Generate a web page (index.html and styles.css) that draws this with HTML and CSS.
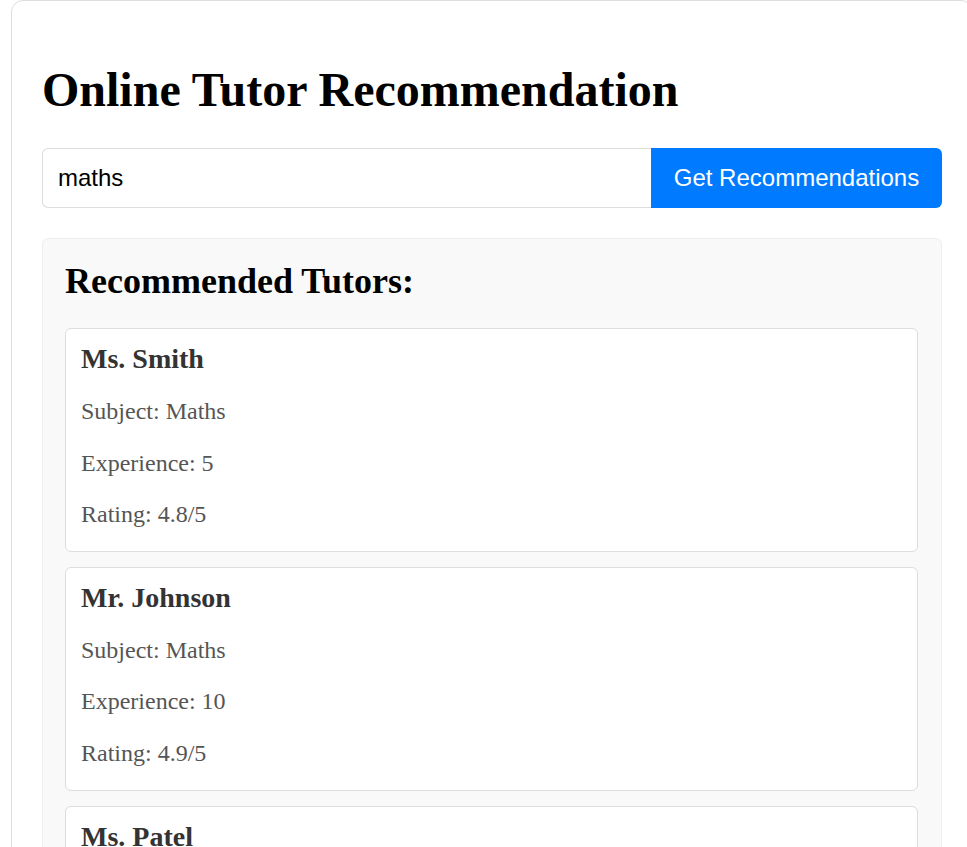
FILE: index.html
```html
<!DOCTYPE html>
<html lang="en">
<head>
<meta charset="utf-8">
<title>Online Tutor Recommendation</title>
<link rel="stylesheet" href="styles.css">
</head>
<body>
<div class="container">
  <h1 class="title">Online Tutor Recommendation</h1>
  <form class="search">
    <input class="search-input" type="text" value="maths">
    <button class="search-btn" type="button">Get Recommendations</button>
  </form>
  <section class="results">
    <h2 class="results-title">Recommended Tutors:</h2>
    <div class="card">
      <h3 class="card-name">Ms. Smith</h3>
      <p class="card-line">Subject: Maths</p>
      <p class="card-line">Experience: 5</p>
      <p class="card-line">Rating: 4.8/5</p>
    </div>
    <div class="card">
      <h3 class="card-name">Mr. Johnson</h3>
      <p class="card-line">Subject: Maths</p>
      <p class="card-line">Experience: 10</p>
      <p class="card-line">Rating: 4.9/5</p>
    </div>
    <div class="card">
      <h3 class="card-name">Ms. Patel</h3>
      <p class="card-line">Subject: Maths</p>
      <p class="card-line">Experience: 7</p>
      <p class="card-line">Rating: 4.7/5</p>
    </div>
  </section>
</div>
</body>
</html>
```

FILE: styles.css
```css
html {
  overflow: hidden;
}

body {
  margin: 0;
  padding: 0 0 0 11px;
  background: #ffffff;
  font-family: "Liberation Serif", "Times New Roman", serif;
}

.container {
  width: 962px;
  box-sizing: border-box;
  padding: 30px 30px 30px;
  border: 1px solid #dddddd;
  border-radius: 12px;
  background: #ffffff;
}

.title {
  margin: 31px 0 31px;
  font-size: 48px;
  line-height: 55px;
  font-weight: bold;
  color: #000000;
}

.search {
  display: flex;
  margin: 0 0 30px;
}

.search-input {
  flex: 1;
  min-width: 0;
  height: 60px;
  box-sizing: border-box;
  padding: 0 15px;
  border: 1px solid #dddddd;
  border-right: none;
  border-radius: 6px 0 0 6px;
  font-family: "Liberation Sans", Arial, sans-serif;
  font-size: 24px;
  color: #000000;
  outline: none;
}

.search-btn {
  width: 291px;
  height: 60px;
  box-sizing: border-box;
  padding: 0 22px;
  border: none;
  border-radius: 0 6px 6px 0;
  background: #007bff;
  color: #ffffff;
  font-family: "Liberation Sans", Arial, sans-serif;
  font-size: 24px;
  text-align: center;
  cursor: pointer;
}

.results {
  padding: 22px 23px 22px 22px;
  border: 1px solid #eeeeee;
  border-radius: 6px;
  background: #f9f9f9;
}

.results-title {
  margin: 0 0 26px;
  font-size: 36px;
  line-height: 41px;
  font-weight: bold;
  color: #000000;
}

.card {
  margin-bottom: 15px;
  padding: 15px 15px 22px;
  border: 1px solid #dddddd;
  border-radius: 6px;
  background: #ffffff;
}

.card-name {
  margin: 0;
  font-size: 28px;
  line-height: 30px;
  font-weight: bold;
  color: #333333;
}

.card-line {
  margin: 24px 0 0;
  font-size: 24px;
  line-height: 27.6px;
  color: #555555;
}
```
